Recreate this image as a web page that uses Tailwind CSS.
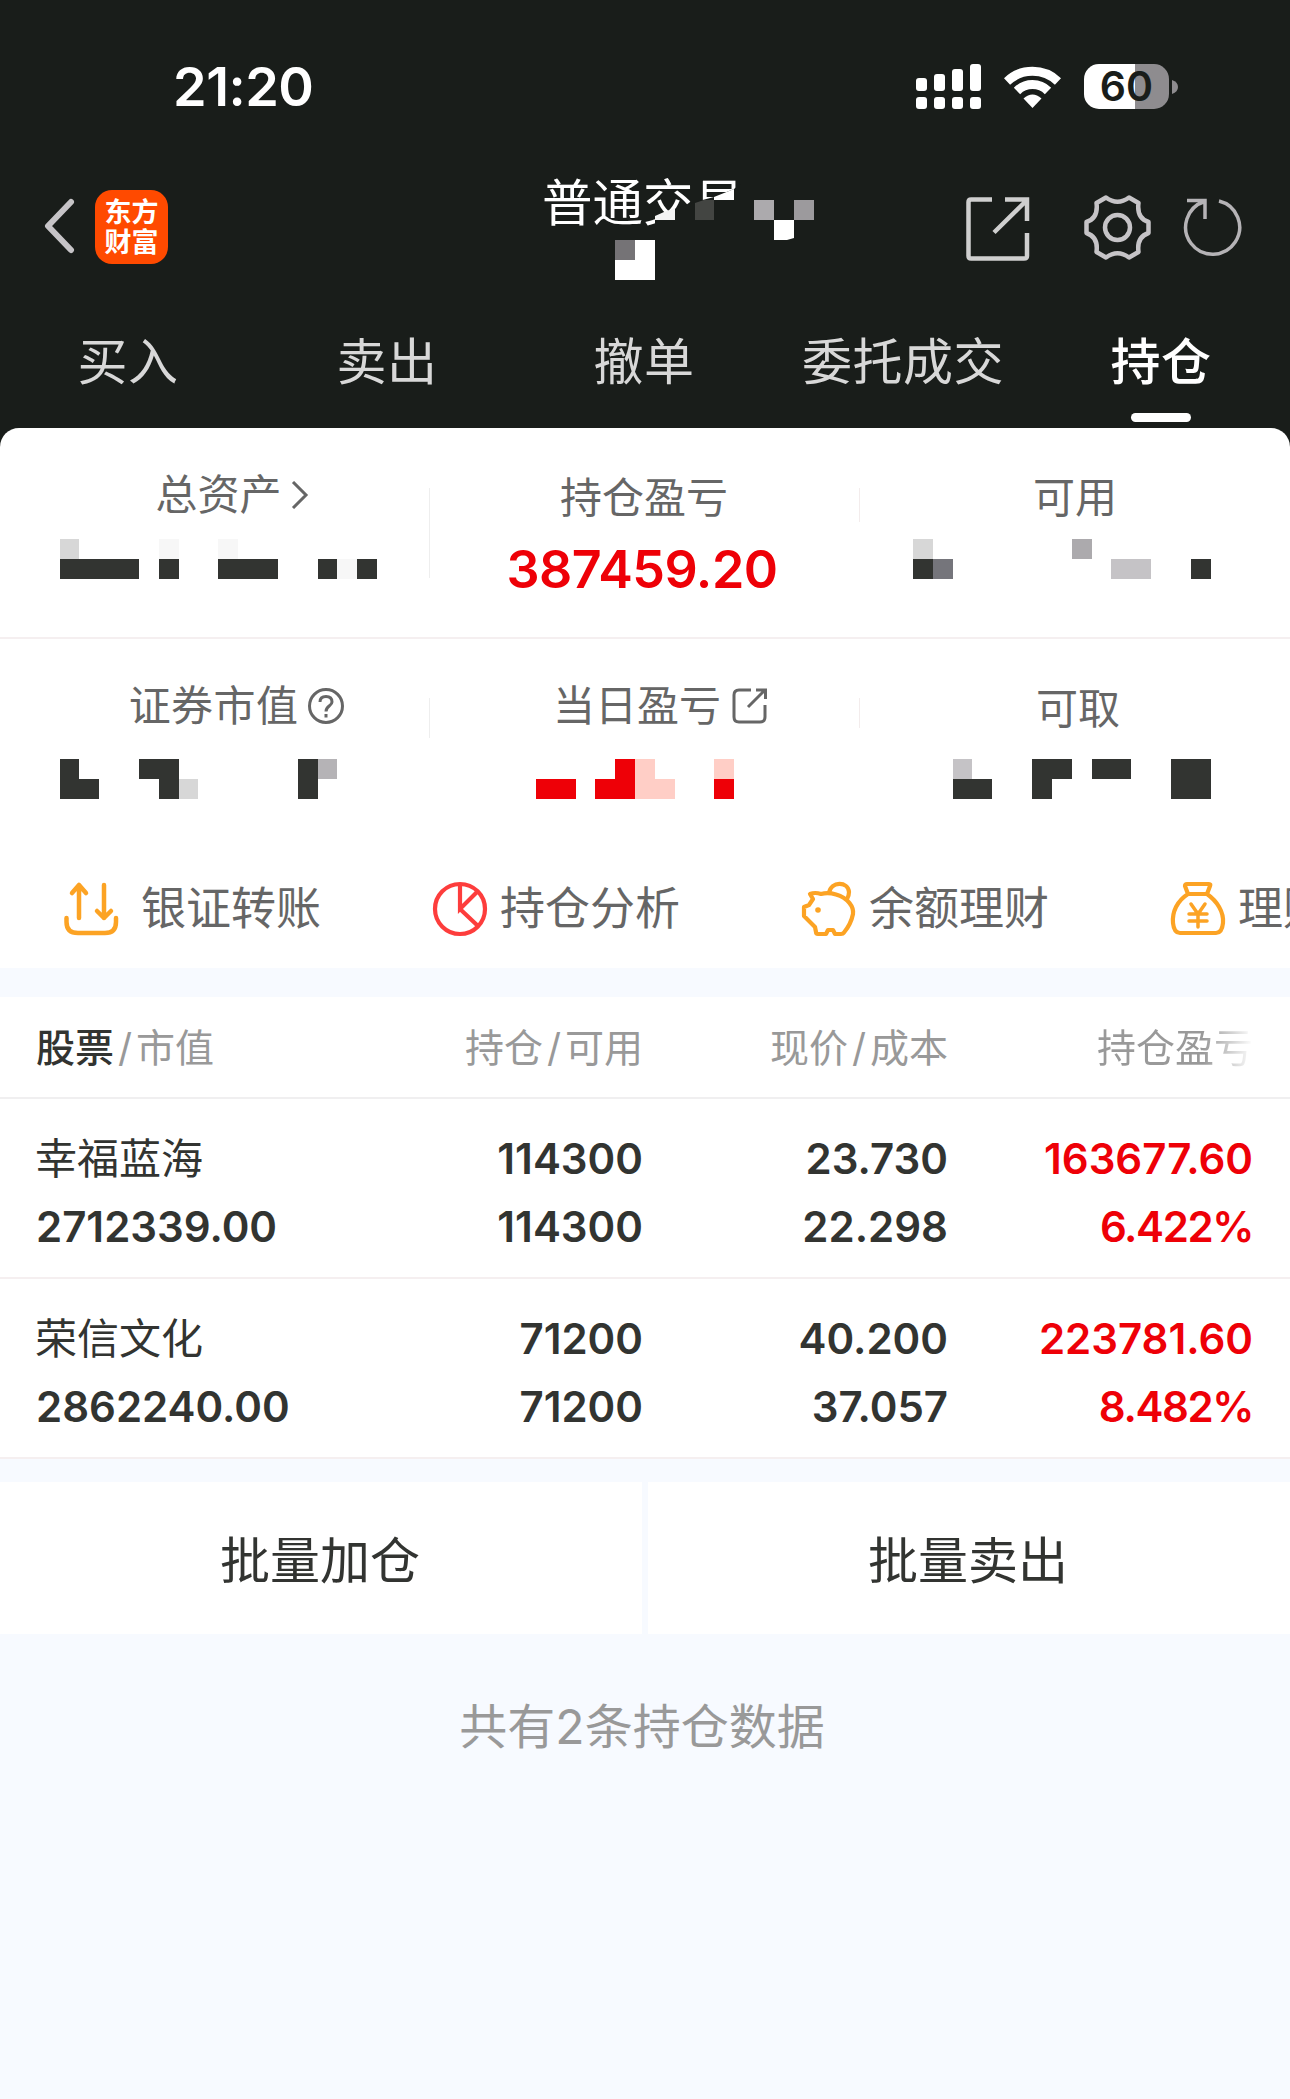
<!DOCTYPE html>
<html lang="zh-CN">
<head>
    <meta charset="UTF-8">
    <meta name="viewport" content="width=device-width, initial-scale=1.0">
    <title>持仓</title>
    <script src="https://cdn.jsdelivr.net/npm/@tailwindcss/browser@4"></script>
</head>
<body class="w-[1290px] h-[2099px] overflow-hidden bg-[#f7faff] font-['Inter','Noto_Sans_CJK_SC',sans-serif] text-[#323431]">

    <header class="h-[428px] bg-[#191d1a] text-white">
        <!-- status bar -->
        <div class="h-[173px] pl-[173px] pr-[112px] flex items-center justify-between">
            <div class="text-[54px] leading-none font-semibold tracking-[-0.5px]">21:20</div>
            <div class="flex items-center">
                <svg class="w-[65px] h-[45px]" viewBox="0 0 65 45" fill="#fff">
                    <rect x="0" y="14" width="11" height="13" rx="3"/>
                    <rect x="18" y="10" width="11" height="17" rx="3"/>
                    <rect x="36" y="5" width="11" height="22" rx="3"/>
                    <rect x="54" y="0" width="11" height="27" rx="3"/>
                    <rect x="0" y="33" width="11" height="12" rx="3"/>
                    <rect x="18" y="33" width="11" height="12" rx="3"/>
                    <rect x="36" y="33" width="11" height="12" rx="3"/>
                    <rect x="54" y="33" width="11" height="12" rx="3"/>
                </svg>
                <svg class="ml-[23px] w-[57px] h-[42px]" viewBox="0 0 57 42" fill="none" stroke="#fff" stroke-width="9">
                    <path d="M3 15.500A37 37 0 0 1 54 15.500"/>
                    <path d="M13 25A22 22 0 0 1 44 25"/>
                    <path d="M28.500 42L19.500 32.500Q28.500 24.500 37.500 32.500Z" fill="#fff" stroke="none"/>
                </svg>
                <div class="ml-[23px] w-[85px] h-[45px] rounded-[15px] bg-linear-to-r from-white from-60% to-[#8e8c8f] to-60% flex items-center justify-center text-[41px] leading-none font-semibold text-[#191d1a]">60</div>
                <svg class="ml-[3px] w-[6px] h-[14px]" viewBox="0 0 6 14" fill="#8e8c8f"><path d="M0 0Q6 2 6 7T0 14Z"/></svg>
            </div>
        </div>

        <!-- title bar -->
        <div class="relative h-[127px] pt-[2px] pl-[43px] pr-[48px] flex items-start">
            <svg class="mt-[23px] w-[32px] h-[56px]" viewBox="0 0 32 56" fill="none" stroke="#c6c4c7" stroke-width="6" stroke-linecap="round" stroke-linejoin="round"><path d="M28 4L5 28L28 52"/></svg>
            <div class="ml-[20px] mt-[15px] w-[73px] h-[74px] pt-0.5 rounded-[17px] bg-[#ff4a00] flex flex-col items-center justify-center text-[27px] leading-[30px] font-bold">
                <span>东方</span>
                <span>财富</span>
            </div>
            <div class="absolute left-[542px] top-[3px] text-[50.5px] leading-[54px]">普通交易</div>
            <!-- masked account number -->
            <svg class="absolute left-[595px] top-[7px] w-[240px] h-[110px]" viewBox="595 180 240 110">
                <path d="M655 217L675 209L695 202L714 197L734 189L745 180V240H655Z" fill="#191d1a"/>
                <path d="M655 220V216L664 212L675 208V220Z" fill="#f4f4f4"/>
                <path d="M714 200V197L734 189V200Z" fill="#fff"/>
                <path d="M695 203L704 200H714V220H695Z" fill="#434542"/>
                <rect x="754" y="200" width="20" height="20" fill="#acaaad"/>
                <rect x="794" y="200" width="20" height="20" fill="#9c9a9d"/>
                <path d="M774 220H794V238L787 240H774Z" fill="#fff"/>
                <path d="M635 240H655V280H615V260H635Z" fill="#fff"/>
                <rect x="615" y="240" width="20" height="20" fill="#757376"/>
            </svg>
            <div class="ml-auto mt-[19px] flex">
                <svg class="mt-[3px] w-[64px] h-[64px]" viewBox="0 0 64 64" fill="none" stroke="#cfcfcf" stroke-width="4.500">
                    <path d="M26 2.500H5Q2.500 2.500 2.500 5V59Q2.500 61.500 5 61.500H58Q61 61.500 61 59V36M39 2.500H61V24M61 3L28 35.500"/>
                </svg>
                <svg class="ml-[54px] mt-px w-[67px] h-[65px]" viewBox="0 0 67 65" fill="none" stroke="#c6c4c7" stroke-width="4.500" stroke-linejoin="round">
                    <path d="M22 2.500Q33.500 11 45 2.500L54.500 8Q52.500 23 64.500 27V38Q52.500 42 54.500 57L45 62.500Q33.500 54 22 62.500L12.500 57Q14.500 42 2.500 38V27Q14.500 23 12.500 8Z"/>
                    <circle cx="33.500" cy="32.500" r="12.500"/>
                </svg>
                <svg class="ml-[32px] mt-[3px] w-[59px] h-[60px]" viewBox="0 0 59 60" fill="none" stroke="#b5b3b6" stroke-width="3.500">
                    <path d="M36 4A27 27 0 1 1 21.500 4.500M4 3.500H22V22"/>
                </svg>
            </div>
        </div>

        <!-- tabs -->
        <nav class="h-[128px] grid grid-cols-5 text-center text-[50px] leading-[60px] tracking-[0.5px] text-[#d8d8d8]">
            <div class="pt-[32px] -ml-0.5">买入</div>
            <div class="pt-[32px]">卖出</div>
            <div class="pt-[32px] -ml-0.5">撤单</div>
            <div class="pt-[32px]">委托成交</div>
            <div class="pt-[32px] flex flex-col items-center font-medium text-white">
                持仓
                <span class="mt-[21px] w-[60px] h-[9px] rounded-full bg-white"></span>
            </div>
        </nav>
    </header>

    <main>
        <div class="bg-[#191d1a]">
            <!-- account summary -->
            <section class="rounded-t-[19px] bg-white text-[42px] leading-[50px] text-[#666]">
                <div class="h-[211px] grid grid-cols-3 border-b-2 border-[#f5eff0]">
                    <div class="relative flex flex-col items-center pt-[42px]">
                        <div class="flex items-center pl-[34px]">总资产
                            <svg class="ml-[9px] w-[18px] h-[28px]" viewBox="0 0 18 28" fill="none" stroke="#666" stroke-width="3"><path d="M2 1L15 14L2 27"/></svg>
                        </div>
                        <svg class="ml-[2px] mt-[19px] w-[322px] h-[40px]" viewBox="0 0 322 40" fill="#323431">
                            <path d="M5 0H24V20H5Z" fill="#d7d7d7"/>
                            <path d="M104 0H124V20H104ZM163 0H183V20H163ZM282 20H302V40H282Z" fill="#f7f7f7"/>
                            <path d="M5 20H84V40H5ZM104 20H124V40H104ZM163 20H223V40H163ZM263 20H282V40H263ZM302 20H322V40H302Z"/>
                        </svg>
                        <span class="absolute right-0 top-[60px] w-px h-[90px] bg-[#eee]"></span>
                    </div>
                    <div class="relative flex flex-col items-center pt-[45px]">
                        <div class="mr-0.5">持仓盈亏</div>
                        <div class="mt-[22px] pr-1.5 text-[52px] leading-[50px] font-semibold tracking-[-0.5px] text-[#ee0007]">387459.20</div>
                        <span class="absolute right-0 top-[60px] w-px h-[34px] bg-[#f3ecec]"></span>
                    </div>
                    <div class="flex flex-col items-center pt-[45px]">
                        <div>可用</div>
                        <svg class="mr-[26px] mt-[16px] w-[298px] h-[40px]" viewBox="913 0 298 40" fill="#323431">
                            <path d="M913 0H933V20H913Z" fill="#d7d7d7"/>
                            <path d="M913 20H933V40H913ZM1191 20H1211V40H1191Z"/>
                            <path d="M933 20H953V40H933Z" fill="#75757b"/>
                            <path d="M1072 0H1092V20H1072Z" fill="#acaaad"/>
                            <path d="M1111 20H1151V40H1111Z" fill="#c5c3c6"/>
                        </svg>
                    </div>
                </div>
                <div class="h-[211px] grid grid-cols-3">
                    <div class="relative flex flex-col items-center pt-[42px]">
                        <div class="flex items-center pl-[44px]"><span class="tracking-[0.4px]">证券市值</span>
                            <svg class="ml-[9px] w-[38px] h-[38px]" viewBox="0 0 38 38" fill="none" stroke="#666" stroke-width="3">
                                <circle cx="19" cy="19" r="16.500"/>
                                <path d="M13 15Q13 9.500 19 9.500T25 15C25 19 19 18.500 19 24.500M19 27V30.500"/>
                            </svg>
                        </div>
                        <svg class="ml-[2px] mt-[28px] w-[322px] h-[40px]" viewBox="0 0 322 40" fill="#323431">
                            <path d="M5 0H24V20H44V40H5ZM84 0H124V40H104V20H84ZM243 0H263V40H243Z"/>
                            <path d="M124 20H143V40H124Z" fill="#d7d7d7"/>
                            <path d="M263 0H282V20H263Z" fill="#b5b3b6"/>
                        </svg>
                        <span class="absolute right-0 top-[59px] w-px h-[40px] bg-[#eee]"></span>
                    </div>
                    <div class="relative flex flex-col items-center pt-[42px]">
                        <div class="flex items-center pl-[31px]">当日盈亏
                            <svg class="ml-[11px] w-[36px] h-[36px]" viewBox="0 0 36 36" fill="none" stroke="#666" stroke-width="3">
                                <path d="M19 2H7Q2 2 2 7V29Q2 34 7 34H28Q33 34 33 29V17M24 2H33.500V11M33 2L16 19"/>
                            </svg>
                        </div>
                        <svg class="mr-[20px] mt-[28px] w-[220px] h-[40px]" viewBox="525 0 220 40" fill="#ee0007">
                            <path d="M536 20H576V40H536ZM595 20H615V0H635V40H595ZM714 20H734V40H714Z"/>
                            <path d="M635 0H655V20H675V40H635ZM714 0H734V20H714Z" fill="#ffcec6"/>
                        </svg>
                        <span class="absolute right-0 top-[59px] w-px h-[30px] bg-[#f3ecec]"></span>
                    </div>
                    <div class="flex flex-col items-center pt-[45px]">
                        <div class="pl-1.5">可取</div>
                        <svg class="mr-[26px] mt-[25px] w-[298px] h-[40px]" viewBox="913 0 298 40" fill="#323431">
                            <path d="M953 0H972V20H953Z" fill="#c5c3c6"/>
                            <path d="M953 20H992V40H953ZM1032 0H1072V20H1052V40H1032ZM1092 0H1131V20H1092ZM1171 0H1211V40H1171Z"/>
                        </svg>
                    </div>
                </div>

                <!-- shortcuts -->
                <div class="h-[118px] pt-[30px] pl-[63px] flex items-start overflow-hidden text-[45px] leading-[56px] whitespace-nowrap">
                    <div class="w-[369px] shrink-0 flex items-center">
                        <svg class="mr-[22px] w-[56px] h-[56px]" viewBox="0 0 56 56" fill="none" stroke="#fca324" stroke-width="4.500" stroke-linecap="round" stroke-linejoin="round">
                            <path d="M3.500 37V41Q3.500 52 15 52H42Q53 52 53 41V37M16 37V4M9 12L16 4L23 12M41 4V37M34 30L41 37L48 30"/>
                        </svg><span class="pt-px">银证转账</span>
                    </div>
                    <div class="w-[369px] shrink-0 flex items-center">
                        <svg class="mr-[12px] w-[56px] h-[56px]" viewBox="0 0 56 56" fill="none" stroke="#fd3d3c" stroke-width="4.200">
                            <circle cx="28" cy="28" r="25"/>
                            <path d="M28 3V28L46 10M28 28L46 45"/>
                        </svg><span class="pt-px">持仓分析</span>
                    </div>
                    <div class="w-[369px] shrink-0 flex items-center">
                        <svg class="mr-[12px] w-[56px] h-[56px]" viewBox="0 0 56 56" fill="none" stroke="#fca324" stroke-width="4.200" stroke-linejoin="round">
                            <path d="M9 13Q14 11 20 13Q27 11 35 13.500C47 17 53 26 52 33Q50 43 43 51.500Q42 53 40 53H34L32 49H27L25 53H17Q15 53 15 51L14 46L3 35V26L8 24L12 18Z"/>
                            <path d="M28 12C30 0 47 0 48 11Q48 15 46 18"/>
                            <circle cx="17" cy="29" r="2.800" fill="#fca324" stroke="none"/>
                        </svg><span class="pt-px">余额理财</span>
                    </div>
                    <div class="shrink-0 flex items-center">
                        <svg class="mr-[12px] w-[56px] h-[56px]" viewBox="0 0 56 56" fill="none" stroke="#fca324" stroke-width="4.200" stroke-linejoin="round">
                            <path d="M18 13L15 5Q15 3 17 3H39Q41 3 40 5L37 13ZM18 13C7 20 2 31 3 42Q4 52 10 52H46Q52 52 53 42C54 31 47 20 37 13"/>
                            <path d="M21 23L28 33L35 23M28 33V46M19 33H37M19 40H37" stroke-linecap="round" stroke-width="3.500"/>
                        </svg><span class="pt-px">理财</span>
                    </div>
                </div>
            </section>
        </div>

        <!-- positions -->
        <section class="mt-[29px] bg-white">
            <div class="h-[102px] pt-px pl-[36px] pr-[37px] grid grid-cols-[302px_305px_305px_305px] items-center border-b-2 border-[#f0eff0] text-[39px] leading-none text-[#999] text-right whitespace-nowrap">
                <div class="text-left"><span class="font-medium text-[#323431]">股票</span><span class="mx-1">/</span>市值</div>
                <div>持仓<span class="mx-1">/</span>可用</div>
                <div>现价<span class="mx-1">/</span>成本</div>
                <div><span class="bg-linear-to-r from-[#999] from-68% to-white to-100% bg-clip-text text-transparent">持仓盈亏</span></div>
            </div>
            <div class="h-[180px] pt-[26px] pl-[36px] pr-[37px] grid grid-cols-[302px_305px_305px_305px] grid-rows-[68px_68px] border-b-2 border-[#f5eff0] text-[42px] leading-[68px] font-semibold text-right">
                <div class="-ml-px text-left font-normal">幸福蓝海</div>
                <div>114300</div>
                <div>23.730</div>
                <div class="text-[#ee0007]">163677.60</div>
                <div class="text-left">2712339.00</div>
                <div>114300</div>
                <div>22.298</div>
                <div class="tracking-[-1.4px] text-[#ee0007]">6.422%</div>
            </div>
            <div class="h-[180px] pt-[26px] pl-[36px] pr-[37px] grid grid-cols-[302px_305px_305px_305px] grid-rows-[68px_68px] border-b-2 border-[#f5eff0] text-[42px] leading-[68px] font-semibold text-right">
                <div class="-ml-px text-left font-normal">荣信文化</div>
                <div>71200</div>
                <div>40.200</div>
                <div class="text-[#ee0007]">223781.60</div>
                <div class="text-left">2862240.00</div>
                <div>71200</div>
                <div>37.057</div>
                <div class="tracking-[-1.4px] text-[#ee0007]">8.482%</div>
            </div>
        </section>

        <!-- batch actions -->
        <div class="mt-[23px] h-[152px] grid grid-cols-2 gap-1.5 text-[50px] leading-[146px] text-center">
            <button class="pt-1.5 pr-0.5 bg-white">批量加仓</button>
            <button class="pt-1.5 pr-0.5 bg-white">批量卖出</button>
        </div>
        <p class="mt-[64px] pr-[6px] text-center text-[48px] leading-[58px] text-[#999]">共有2条持仓数据</p>
    </main>
</body>
</html>
